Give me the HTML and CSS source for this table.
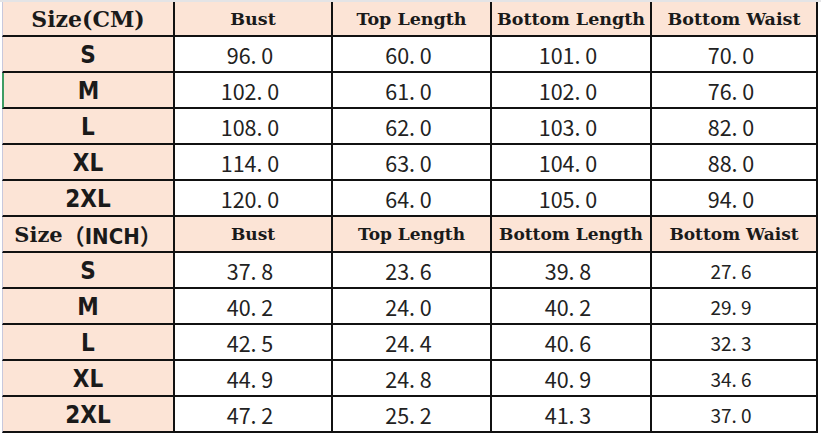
FILE: index.html
```html
<!DOCTYPE html>
<html>
<head>
<meta charset="utf-8">
<link rel="stylesheet" href="styles.css">
</head>
<body>
<div class="sheet">
  <div class="grid">
    <div class="cell size head first"><span class="serif">Size(CM)</span></div>
    <div class="cell head">Bust</div>
    <div class="cell head">Top Length</div>
    <div class="cell head">Bottom Length</div>
    <div class="cell head">Bottom Waist</div>

    <div class="cell size first">S</div><div class="cell num">96. 0</div><div class="cell num">60. 0</div><div class="cell num">101. 0</div><div class="cell num">70. 0</div>
    <div class="cell size first active">M</div><div class="cell num">102. 0</div><div class="cell num">61. 0</div><div class="cell num">102. 0</div><div class="cell num">76. 0</div>
    <div class="cell size first">L</div><div class="cell num">108. 0</div><div class="cell num">62. 0</div><div class="cell num">103. 0</div><div class="cell num">82. 0</div>
    <div class="cell size first">XL</div><div class="cell num">114. 0</div><div class="cell num">63. 0</div><div class="cell num">104. 0</div><div class="cell num">88. 0</div>
    <div class="cell size first">2XL</div><div class="cell num">120. 0</div><div class="cell num">64. 0</div><div class="cell num">105. 0</div><div class="cell num">94. 0</div>

    <div class="cell size head first"><span class="serif sm">Size</span><span class="inch">（INCH）</span></div>
    <div class="cell head h2">Bust</div>
    <div class="cell head h2">Top Length</div>
    <div class="cell head h2">Bottom Length</div>
    <div class="cell head h2">Bottom Waist</div>

    <div class="cell size first">S</div><div class="cell num">37. 8</div><div class="cell num">23. 6</div><div class="cell num">39. 8</div><div class="cell num small">27. 6</div>
    <div class="cell size first">M</div><div class="cell num">40. 2</div><div class="cell num">24. 0</div><div class="cell num">40. 2</div><div class="cell num small">29. 9</div>
    <div class="cell size first">L</div><div class="cell num">42. 5</div><div class="cell num">24. 4</div><div class="cell num">40. 6</div><div class="cell num small">32. 3</div>
    <div class="cell size first">XL</div><div class="cell num">44. 9</div><div class="cell num">24. 8</div><div class="cell num">40. 9</div><div class="cell num small">34. 6</div>
    <div class="cell size first">2XL</div><div class="cell num">47. 2</div><div class="cell num">25. 2</div><div class="cell num">41. 3</div><div class="cell num small">37. 0</div>
  </div>
</div>
</body>
</html>
```

FILE: styles.css
```css
html, body {
  margin: 0;
  padding: 0;
  background: #ffffff;
}

.sheet {
  width: 821px;
  height: 437px;
  padding-left: 2px;
  box-sizing: border-box;
  border-top: 2px solid #e4e4e6;
  background: #ffffff;
}

.grid {
  display: grid;
  grid-template-columns: 173px 158px 159px 160px 166px;
  grid-template-rows: 35px;
  grid-auto-rows: 36px;
}

.cell {
  box-sizing: border-box;
  border-right: 2px solid #111111;
  border-bottom: 2px solid #111111;
  display: flex;
  align-items: center;
  justify-content: center;
  color: #1a1a1a;
  background: #ffffff;
}

.first {
  border-left: 1px solid #c8c8dc;
}

.first.active {
  border-left: 2px solid #3f9c63;
}

.size {
  background: #fce4d6;
  font-family: "DejaVu Sans Condensed", "Liberation Sans", Arial, sans-serif;
  font-weight: 700;
  font-size: 24px;
  padding-top: 2px;
}

.head {
  background: #fce4d6;
  font-family: "DejaVu Serif", "Liberation Serif", serif;
  font-weight: 700;
  font-size: 17.5px;
  padding-top: 0;
}

.head.h2 {
  font-size: 17px;
}

.serif {
  font-family: "DejaVu Serif", "Liberation Serif", serif;
  font-weight: 700;
  font-size: 22px;
  letter-spacing: 0;
}

.serif.sm {
  font-size: 21px;
}

.inch {
  font-family: "DejaVu Sans Condensed", "Liberation Sans", "Noto Sans CJK SC", sans-serif;
  font-weight: 700;
  font-size: 22px;
}

.num {
  font-family: "Noto Sans CJK SC", "Noto Sans", sans-serif;
  font-weight: 400;
  font-size: 21.5px;
  color: #222222;
  padding-top: 1px;
  padding-right: 6px;
}

.num.small {
  font-size: 19px;
}
```
